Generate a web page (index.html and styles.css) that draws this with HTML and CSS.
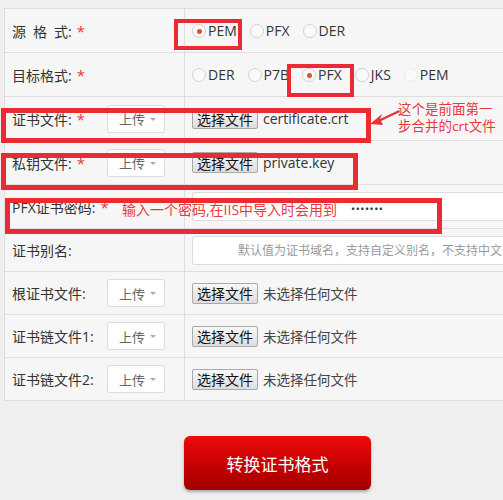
FILE: index.html
```html
<!DOCTYPE html>
<html lang="zh">
<head>
<meta charset="utf-8">
<link rel="stylesheet" href="styles.css">
</head>
<body>
<div class="page">
  <div class="form">
    <div class="row h45">
      <div class="lab"><span class="name"><span class="wide">源格</span>式:</span><span class="req">*</span></div>
      <div class="val">
        <span class="opt"><i class="radio on"></i>PEM</span>
        <span class="opt"><i class="radio"></i>PFX</span>
        <span class="opt"><i class="radio"></i>DER</span>
      </div>
    </div>
    <div class="row h44">
      <div class="lab"><span class="name">目标格式:</span><span class="req">*</span></div>
      <div class="val">
        <span class="opt"><i class="radio"></i>DER</span>
        <span class="opt"><i class="radio"></i>P7B</span>
        <span class="opt"><i class="radio on"></i>PFX</span>
        <span class="opt"><i class="radio"></i>JKS</span>
        <span class="opt"><i class="radio faint"></i>PEM</span>
      </div>
    </div>
    <div class="row h44">
      <div class="lab"><span class="name fixed">证书文件:<span class="req">*</span></span><span class="select">上传<b class="caret"></b></span></div>
      <div class="val"><span class="filebtn">选择文件</span><span class="fname">certificate.crt</span></div>
    </div>
    <div class="row h44">
      <div class="lab"><span class="name fixed">私钥文件:<span class="req">*</span></span><span class="select">上传<b class="caret"></b></span></div>
      <div class="val"><span class="filebtn">选择文件</span><span class="fname">private.key</span></div>
    </div>
    <div class="row h44">
      <div class="lab"><span class="name">PFX证书密码:</span><span class="req">*</span></div>
      <div class="val"><span class="input pwd">•••••••</span></div>
    </div>
    <div class="row h43">
      <div class="lab"><span class="name">证书别名:</span></div>
      <div class="val"><span class="input alias">默认值为证书域名，支持自定义别名，不支持中文</span></div>
    </div>
    <div class="row h43">
      <div class="lab"><span class="name fixed">根证书文件:</span><span class="select">上传<b class="caret"></b></span></div>
      <div class="val"><span class="filebtn">选择文件</span><span class="fname none">未选择任何文件</span></div>
    </div>
    <div class="row h43">
      <div class="lab"><span class="name fixed">证书链文件1:</span><span class="select">上传<b class="caret"></b></span></div>
      <div class="val"><span class="filebtn">选择文件</span><span class="fname none">未选择任何文件</span></div>
    </div>
    <div class="row h43">
      <div class="lab"><span class="name fixed">证书链文件2:</span><span class="select">上传<b class="caret"></b></span></div>
      <div class="val"><span class="filebtn">选择文件</span><span class="fname none">未选择任何文件</span></div>
    </div>
  </div>

  <div class="actions"><span class="submit">转换证书格式</span></div>

  <div class="mark m1"></div>
  <div class="mark m2"></div>
  <div class="mark m3"></div>
  <div class="mark m4"></div>
  <div class="mark m5"></div>
  <div class="note n1">这个是前面第一<br>步合并的crt文件</div>
  <div class="note n2">输入一个密码,在IIS中导入时会用到</div>
  <svg class="arrow" width="34" height="22" viewBox="0 0 34 22">
    <path d="M2 17 L14 7 L12 12 L31 3 L32 5 L13 14 L15 18 Z" fill="#e8303a"/>
  </svg>
</div>
</body>
</html>
```
FILE: styles.css
```css
html, body {
  margin: 0;
  padding: 0;
  background: #efefef;
  overflow: hidden;
}
.page {
  position: relative;
  width: 503px;
  height: 500px;
  font-family: "Open Sans", "Noto Sans CJK SC", sans-serif;
  font-size: 14px;
  color: #333;
}
.form {
  margin: 8px 0 0 4px;
  width: 520px;
  border-top: 1px solid #dedede;
  border-left: 1px solid #dedede;
  background: #f6f6f6;
}
.row {
  display: grid;
  grid-template-columns: 180px 1fr;
  border-bottom: 1px solid #dedede;
  box-sizing: border-box;
}
.h45 { height: 44px; }
.h44 { height: 44px; }
.h43 { height: 43px; }
.lab {
  display: flex;
  align-items: center;
  padding-left: 7px;
  border-right: 1px solid #dedede;
  white-space: nowrap;
}
.name { color: #333; }
.name.fixed { width: 95px; display: inline-block; }
.wide { letter-spacing: 7px; }
.req {
  color: #e4393c;
  margin-left: 5px;
  font-size: 15px;
}
.val {
  display: flex;
  align-items: center;
  padding-left: 7px;
  white-space: nowrap;
}
.opt {
  display: inline-flex;
  align-items: center;
  margin-right: 13px;
  color: #333;
}
.radio {
  width: 12px;
  height: 12px;
  border: 1px solid #d2d2d2;
  border-radius: 50%;
  background: #fafafa;
  margin-right: 2px;
  position: relative;
  box-sizing: content-box;
}
.radio.faint { border-color: #e8e8e8; }
.radio.on::after {
  content: "";
  position: absolute;
  left: 4px;
  top: 4px;
  width: 5px;
  height: 5px;
  border-radius: 50%;
  background: #d9532b;
}
.select {
  display: inline-flex;
  align-items: center;
  width: 58px;
  height: 28px;
  box-sizing: border-box;
  padding-left: 11px;
  background: #fff;
  border: 1px solid #dcdcdc;
  border-radius: 3px;
  color: #666;
  font-size: 13px;
  position: relative;
}
.caret {
  position: absolute;
  right: 8px;
  top: 12px;
  width: 0;
  height: 0;
  border-left: 3px solid transparent;
  border-right: 3px solid transparent;
  border-top: 3px solid #aaa;
}
.filebtn {
  display: inline-flex;
  align-items: center;
  justify-content: center;
  width: 66px;
  height: 21px;
  box-sizing: border-box;
  border: 1px solid #a9a9a9;
  border-radius: 2px;
  background: linear-gradient(#f8f8f8, #dddddd);
  color: #111;
  font-size: 14px;
}
.fname {
  margin-left: 5px;
  color: #333;
  font-size: 14px;
}
.fname.none { font-size: 13.5px; color: #444; }
.input {
  display: flex;
  align-items: center;
  flex: 1;
  height: 29px;
  box-sizing: border-box;
  background: #fff;
  border: 1px solid #dcdcdc;
  border-right: none;
  border-radius: 3px 0 0 3px;
}
.pwd {
  padding-left: 158px;
  padding-top: 4px;
  font-size: 11px;
  letter-spacing: 0.5px;
  color: #333;
}
.alias {
  padding-left: 45px;
  font-size: 12px;
  color: #9a9a9a;
}
.actions {
  margin-top: 35px;
  padding-left: 184px;
}
.submit {
  display: flex;
  align-items: center;
  justify-content: center;
  width: 187px;
  height: 54px;
  border-radius: 6px;
  background: linear-gradient(#f00a0a, #c00000 60%, #a30000);
  box-shadow: 0 2px 3px rgba(0,0,0,0.3);
  color: #fff;
  font-size: 17px;
}
.mark {
  position: absolute;
  border: 4px solid #ec2a33;
  box-sizing: border-box;
}
.m1 { left: 174px; top: 11px; width: 68px; height: 31px; }
.m2 { left: 287px; top: 56px; width: 67px; height: 33px; }
.m3 { left: 1px; top: 100px; width: 370px; height: 35px; border-width: 5px; }
.m4 { left: 1px; top: 145px; width: 357px; height: 37px; border-width: 5px; }
.m5 { left: 5px; top: 190px; width: 437px; height: 36px; border-width: 5px; }
.note {
  position: absolute;
  color: #e8393c;
  white-space: nowrap;
}
.n1 { left: 398px; top: 93px; font-size: 13.5px; line-height: 17px; }
.n2 { left: 122px; top: 192px; font-size: 14px; line-height: 20px; }
.arrow { position: absolute; left: 368px; top: 99px; }
```
